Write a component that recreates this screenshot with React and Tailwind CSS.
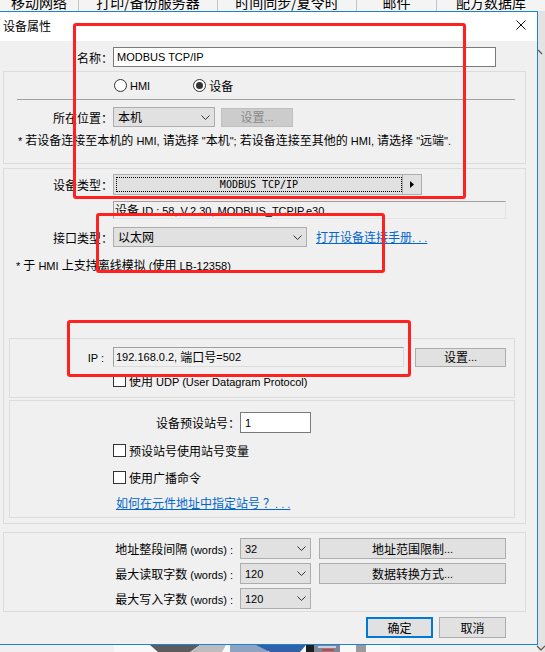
const CJK_RUN = /([\u2e80-\u9fff\u3000-\u303f\uff00-\uffef]+)/;
const IS_CJK = /[\u2e80-\u9fff\u3000-\u303f\uff00-\uffef]/;

// Mixed-script text: CJK runs in Noto CJK 12px, latin runs a bit smaller in Liberation Sans
function T({ children }) {
  return String(children)
    .split(CJK_RUN)
    .filter(Boolean)
    .map((part, i) =>
      IS_CJK.test(part) ? (
        <span key={i} className="font-['Noto_Sans_CJK_SC',sans-serif] text-[12px]">
          {part}
        </span>
      ) : (
        <span key={i} className="font-['Liberation_Sans',sans-serif] text-[11px] whitespace-pre">
          {part}
        </span>
      )
    );
}

function Chevron() {
  return (
    <svg width="9" height="5" viewBox="0 0 9 5" className="shrink-0">
      <path d="M0.5 0.5 L4.5 4.5 L8.5 0.5" fill="none" stroke="#333" strokeWidth="1" />
    </svg>
  );
}

function Select({ value, className }) {
  return (
    <div
      className={`flex items-center justify-between border border-[#adadad] bg-[#e1e1e1] pl-[4px] pr-[4px] ${className}`}
    >
      <T>{value}</T>
      <Chevron />
    </div>
  );
}

function Button({ label, className }) {
  return (
    <div
      className={`flex items-center justify-center border border-[#adadad] bg-[#e1e1e1] ${className}`}
    >
      <T>{label}</T>
    </div>
  );
}

function Check() {
  return <div className="h-[13px] w-[13px] shrink-0 border border-[#333] bg-white" />;
}

function Radio({ on }) {
  return (
    <div className="flex h-[13px] w-[13px] shrink-0 items-center justify-center rounded-full border border-[#333] bg-white">
      {on && <div className="h-[7px] w-[7px] rounded-full bg-[#333]" />}
    </div>
  );
}

function Link({ text, className }) {
  return (
    <div className={`text-[#0066cc] underline decoration-[#0066cc] ${className}`}>
      <T>{text}</T>
    </div>
  );
}

function Header() {
  const tabs = [
    ["移动网络", "w-[79px]"],
    ["打印/备份服务器", "w-[139px]"],
    ["时间同步/夏令时", "w-[139px]"],
    ["邮件", "w-[80px]"],
    ["配方数据库", "flex-1"],
  ];
  return (
    <div className="flex h-[11px] overflow-hidden bg-[#f4f4f4]">
      {tabs.map(([t, w], i) => (
        <div
          key={i}
          className={`${w} flex h-[11px] justify-center border-r border-[#c4c4c4] last:border-r-0`}
        >
          <span className="-mt-[6px] font-['Noto_Sans_CJK_SC',sans-serif] text-[14px] leading-[16px] text-black">
            {t}
          </span>
        </div>
      ))}
    </div>
  );
}

function Backdrop() {
  return (
    <svg width="545" height="7" viewBox="0 0 545 7" className="block">
      <rect x="0" y="0" width="545" height="7" fill="#f0f0f0" />
      <rect x="114" y="0" width="286" height="7" fill="#f8f8f8" />
      <polygon points="150,0 200,0 190,7 158,7" fill="#5c5c5c" />
      <polygon points="200,0 226,0 222,7 190,7" fill="#bdbdbd" />
      <rect x="230" y="0" width="38" height="7" fill="#8ea2c2" />
      <polygon points="256,0 306,0 300,7 270,7" fill="#2f62a8" />
      <rect x="306" y="0" width="14" height="7" fill="#1e1e1e" />
      <rect x="314" y="0" width="26" height="7" fill="#7f8796" />
      <rect x="318" y="1" width="18" height="2" fill="#c8d0e4" />
      <rect x="322" y="4" width="12" height="2" fill="#d04040" />
      <rect x="356" y="0" width="10" height="7" fill="#9a9a9a" />
      <rect x="538" y="0" width="7" height="7" fill="#e3e3e3" />
      <path d="M537 1 L541 5 L545 1" fill="none" stroke="#555" strokeWidth="1.2" />
    </svg>
  );
}

function Dialog() {
  return (
    <div className="flex h-[634px] w-[538px] flex-col border-t border-r border-b border-[#1883d7] bg-[#f0f0f0] leading-[16px] text-black">
      {/* title bar */}
      <div className="flex h-[29px] shrink-0 items-start justify-between bg-white pl-[3px] pr-[11px]">
        <div className="mt-[6px] font-['Noto_Sans_CJK_SC',sans-serif] text-[12px] leading-[16px]">
          设备属性
        </div>
        <svg width="10" height="10" viewBox="0 0 10 10" className="mt-[8px]">
          <path d="M0.5 0.5 L9.5 9.5 M9.5 0.5 L0.5 9.5" stroke="#111" strokeWidth="1" />
        </svg>
      </div>

      <div className="flex flex-col">
        {/* name */}
        <div className="mt-[6px] flex h-[20px] items-center">
          <div className="w-[113px] text-right">
            <T>名称：</T>
          </div>
          <div className="flex h-[20px] w-[383px] items-center border border-[#7a7a7a] bg-white pl-[3px]">
            <T>MODBUS TCP/IP</T>
          </div>
        </div>

        {/* HMI / device location */}
        <div className="mt-[4px] ml-[3px] flex h-[93px] w-[523px] flex-col border border-[#dcdcdc]">
          <div className="mt-[6px] ml-[110px] flex h-[14px] items-center">
            <Radio />
            <span className="ml-[3px]">
              <T>HMI</T>
            </span>
            <div className="ml-[43px]">
              <Radio on />
            </div>
            <span className="ml-[3px]">
              <T>设备</T>
            </span>
          </div>
          <div className="mt-[7px] ml-[13px] h-px w-[498px] bg-[#a0a0a0]" />
          <div className="mt-[7px] flex h-[20px] items-center">
            <div className="w-[109px] text-right">
              <T>所在位置：</T>
            </div>
            <Select value="本机" className="h-[20px] w-[102px]" />
            <div className="ml-[6px] flex h-[19px] w-[72px] items-center justify-center border border-[#bfbfbf] bg-[#cccccc] text-[#8a8a8a]">
              <T>设置...</T>
            </div>
          </div>
          <div className="mt-[4px] h-[16px] pl-[14px]">
            <T>{'* 若设备连接至本机的 HMI, 请选择 "本机"; 若设备连接至其他的 HMI, 请选择 "远端".'}</T>
          </div>
        </div>

        {/* device type / interface */}
        <div className="mt-[4px] ml-[3px] flex h-[356px] w-[523px] flex-col border border-[#dcdcdc]">
          <div className="mt-[5px] flex h-[21px] items-center">
            <div className="w-[109px] text-right">
              <T>设备类型：</T>
            </div>
            <div className="flex h-[21px] w-[309px] border border-[#adadad] bg-[#e1e1e1]">
              <div className="m-[2px] mr-0 flex flex-1 items-center justify-center border border-dotted border-black font-['DejaVu_Sans_Mono',monospace] text-[10px] font-normal">
                MODBUS TCP/IP
              </div>
              <div className="flex w-[19px] items-center justify-center border-l border-[#adadad]">
                <svg width="4" height="7" viewBox="0 0 4 7">
                  <path d="M0 0 L4 3.5 L0 7 Z" fill="#000" />
                </svg>
              </div>
            </div>
          </div>
          <div className="mt-[6px] ml-[109px] h-[18px] w-[393px] border-t border-l border-[#a0a0a0] border-r border-b border-r-[#e4e4e4] border-b-[#e4e4e4] pl-[1px] leading-[14px]">
            <T>设备 ID : 58, V.2.30, MODBUS_TCPIP.e30</T>
          </div>
          <div className="mt-[8px] flex h-[20px] items-center">
            <div className="w-[109px] text-right">
              <T>接口类型：</T>
            </div>
            <Select value="以太网" className="h-[20px] w-[194px]" />
            <Link text="打开设备连接手册. . ." className="ml-[9px]" />
          </div>
          <div className="mt-[9px] h-[16px] pl-[12px]">
            <T>* 于 HMI 上支持离线模拟 (使用 LB-12358)</T>
          </div>

          {/* IP */}
          <div className="mt-[66px] ml-[5px] flex h-[60px] w-[506px] flex-col border border-[#dcdcdc]">
            <div className="mt-[8px] flex h-[20px] items-center">
              <div className="w-[103px] pr-[9px] text-right">
                <T>IP :</T>
              </div>
              <div className="flex h-[20px] w-[291px] items-center border-t border-l border-[#a0a0a0] border-r border-b border-r-[#dcdcdc] border-b-[#dcdcdc] bg-[#f0f0f0] pl-[2px]">
                <T>192.168.0.2, 端口号=502</T>
              </div>
              <Button label="设置..." className="ml-[11px] h-[19px] w-[91px]" />
            </div>
            <div className="mt-[7px] ml-[103px] flex h-[13px] items-center">
              <Check />
              <span className="ml-[3px]">
                <T>使用 UDP (User Datagram Protocol)</T>
              </span>
            </div>
          </div>

          {/* station number */}
          <div className="mt-[2px] ml-[5px] flex h-[118px] w-[506px] flex-col border border-[#dcdcdc]">
            <div className="mt-[11px] flex h-[21px] items-center">
              <div className="w-[230px] text-right">
                <T>设备预设站号：</T>
              </div>
              <div className="flex h-[21px] w-[71px] items-center border border-[#7a7a7a] bg-white pl-[4px]">
                <T>1</T>
              </div>
            </div>
            <div className="mt-[11px] ml-[103px] flex h-[13px] items-center">
              <Check />
              <span className="ml-[3px]">
                <T>预设站号使用站号变量</T>
              </span>
            </div>
            <div className="mt-[14px] ml-[103px] flex h-[13px] items-center">
              <Check />
              <span className="ml-[3px]">
                <T>使用广播命令</T>
              </span>
            </div>
            <Link text="如何在元件地址中指定站号 ？. . ." className="mt-[10px] ml-[106px] h-[16px]" />
          </div>
        </div>

        {/* word limits */}
        <div className="mt-[8px] ml-[3px] flex h-[80px] w-[523px] flex-col border border-[#dcdcdc]">
          <div className="mt-[5px] flex h-[21px] items-center">
            <div className="w-[236px] pr-[7px] text-right">
              <T>地址整段间隔 (words) :</T>
            </div>
            <Select value="32" className="h-[21px] w-[71px]" />
            <Button label="地址范围限制..." className="ml-[8px] h-[21px] w-[187px]" />
          </div>
          <div className="mt-[4px] flex h-[21px] items-center">
            <div className="w-[236px] pr-[7px] text-right">
              <T>最大读取字数 (words) :</T>
            </div>
            <Select value="120" className="h-[21px] w-[71px]" />
            <Button label="数据转换方式..." className="ml-[8px] h-[21px] w-[187px]" />
          </div>
          <div className="mt-[4px] flex h-[21px] items-center">
            <div className="w-[236px] pr-[7px] text-right">
              <T>最大写入字数 (words) :</T>
            </div>
            <Select value="120" className="h-[21px] w-[71px]" />
          </div>
        </div>

        {/* OK / Cancel */}
        <div className="mt-[5px] flex h-[21px]">
          <div className="ml-[366px] flex h-[21px] w-[67px] items-center justify-center border-2 border-[#0078d7] bg-[#e1e1e1]">
            <T>确定</T>
          </div>
          <Button label="取消" className="ml-[6px] h-[21px] w-[67px]" />
        </div>
      </div>
    </div>
  );
}

export default function App() {
  return (
    <div className="relative h-[652px] w-[545px] overflow-hidden bg-[#f0f0f0]">
      <Header />
      <div className="flex h-[634px]">
        <Dialog />
        <div className="relative w-[7px] bg-[#e3e3e3]">
          <svg width="7" height="8" viewBox="0 0 7 8" className="absolute top-[38px] left-0">
            <path d="M0 1 L4 5" fill="none" stroke="#555" strokeWidth="1.2" />
          </svg>
        </div>
      </div>
      <Backdrop />

      {/* red annotation frames */}
      <div className="pointer-events-none absolute top-[23px] left-[73px] h-[176px] w-[393px] rounded-[3px] border-[3px] border-[#ff2020]" />
      <div className="pointer-events-none absolute top-[213px] left-[96px] h-[60px] w-[289px] rounded-[3px] border-[3px] border-[#ff2020]" />
      <div className="pointer-events-none absolute top-[320px] left-[67px] h-[57px] w-[344px] rounded-[3px] border-[3px] border-[#ff2020]" />
    </div>
  );
}
